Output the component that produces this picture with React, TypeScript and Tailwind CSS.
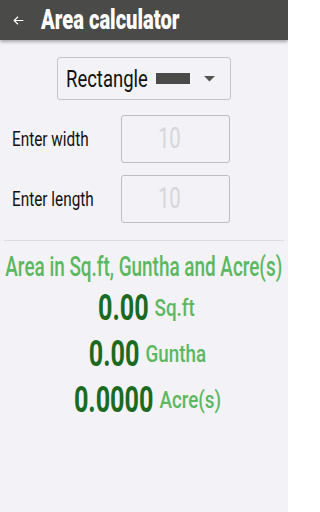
import React from 'react';

const font = { fontFamily: 'Roboto, "Liberation Sans", sans-serif' };

const ResultRow: React.FC<{ value: string; unit: string }> = ({ value, unit }) => (
  <div className="h-[46px] flex items-center justify-center gap-[8px] scale-x-[0.7] origin-center">
    <span className="text-[36px] leading-none font-bold text-[#1b6a1f]">{value}</span>
    <span className="inline-block text-[24px] leading-none font-medium text-[#5cb860] scale-x-[1.12] origin-left">{unit}</span>
  </div>
);

const Field: React.FC<{ label: string }> = ({ label }) => (
  <div className="flex items-center">
    <div className="w-[121px] pl-[12px] pt-[2px]">
      <span className="inline-block whitespace-nowrap text-[21px] text-[#111] scale-x-[0.73] origin-left">{label}</span>
    </div>
    <div className="w-[109px] h-[48px] rounded-[3px] border border-[#bdbdc4] flex items-center justify-center pr-[12px]">
      <span className="inline-block text-[29px] text-[#d6d6dc] scale-x-[0.7]">10</span>
    </div>
  </div>
);

export default function App() {
  return (
    <div className="w-[288px] h-[512px] bg-[#f3f3f7] flex flex-col overflow-hidden" style={font}>
      <div className="h-[40px] shrink-0 bg-[#4a4a48] flex items-center shadow-[0_2px_3px_rgba(0,0,0,0.3)] z-10">
        <svg width="13" height="13" viewBox="0 0 24 24" className="ml-[12px]" fill="none" stroke="white" strokeWidth="2.2">
          <path d="M21 12H4M11 5l-7 7 7 7" />
        </svg>
        <span className="ml-[16px] inline-block whitespace-nowrap text-white text-[28px] font-black scale-x-[0.72] origin-left">
          Area calculator
        </span>
      </div>

      <div className="flex justify-center mt-[17px]">
        <div className="w-[174px] h-[43px] rounded-[3px] border border-[#c4c4cc] flex items-center pl-[8px]">
          <div className="w-[90px]">
            <span className="inline-block whitespace-nowrap text-[24px] text-[#111] scale-x-[0.77] origin-left">Rectangle</span>
          </div>
          <span className="w-[34px] h-[11px] bg-[#4a4a48]" />
          <svg width="11" height="6" viewBox="0 0 11 6" className="ml-[14px]">
            <path d="M0 0h11L5.5 5.5z" fill="#555" />
          </svg>
        </div>
      </div>

      <div className="flex flex-col gap-[12px] mt-[15px]">
        <Field label="Enter width" />
        <Field label="Enter length" />
      </div>

      <div className="mx-[4px] mt-[17px] h-px bg-[#dcdce2]" />

      <div className="mt-[11px] h-[30px] flex items-center justify-center">
        <span className="inline-block whitespace-nowrap text-[27px] font-medium text-[#5cb860] scale-x-[0.7] origin-center">
          Area in Sq.ft, Guntha and Acre(s)
        </span>
      </div>
      <div className="flex flex-col mt-[3px]">
        <ResultRow value="0.00" unit="Sq.ft" />
        <ResultRow value="0.00" unit="Guntha" />
        <ResultRow value="0.0000" unit="Acre(s)" />
      </div>
    </div>
  );
}
